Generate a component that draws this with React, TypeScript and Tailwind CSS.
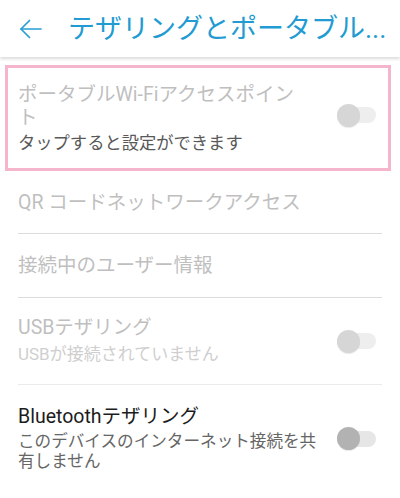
import React from "react";

const font = { fontFamily: '"Roboto", "Noto Sans CJK JP", sans-serif' };

function Switch({ dark = false }: { dark?: boolean }) {
  return (
    <div className="relative w-[39px] h-[23px] flex items-center shrink-0">
      <div className={`w-[39px] h-[16px] rounded-full ${dark ? "bg-[#e6e6e6]" : "bg-[#eeeeee]"}`} />
      <div
        className={`absolute left-0 top-0 w-[23px] h-[23px] rounded-full shadow-[0_1px_1px_rgba(0,0,0,0.08)] ${
          dark ? "bg-[#b2b2b2]" : "bg-[#d6d6d6]"
        }`}
      />
    </div>
  );
}

export default function App() {
  return (
    <div className="w-[400px] h-[498px] bg-white overflow-hidden" style={font}>
      <div className="relative z-10 h-[57px] bg-white flex items-center shadow-[0_2px_3px_rgba(0,0,0,0.14)]">
        <div className="w-[68px] pl-[19px] flex items-center">
          <svg width="24" height="24" viewBox="0 0 24 24" fill="none" stroke="#2a9dd2" strokeWidth="1.7" strokeLinecap="round" strokeLinejoin="round">
            <path d="M22 12H2" />
            <path d="M10.5 3.5 2 12l8.5 8.5" />
          </svg>
        </div>
        <div className="text-[27px] leading-[32px] text-[#219bd1] whitespace-nowrap overflow-hidden">
          テザリングとポータブル...
        </div>
      </div>

      <div className="mt-[8px] ml-[5px] mr-[9px] border-[3px] border-[#f5b6cd] pl-[10px] pr-[12px] pt-[15px] pb-[14px] flex items-center">
        <div className="flex-1">
          <div className="text-[19.5px] leading-[23px] text-[#bfbfbf]">
            ポータブルWi-Fiアクセスポイン
            <br />ト
          </div>
          <div className="mt-[3px] text-[17.3px] leading-[22px] text-[#595959]">タップすると設定ができます</div>
        </div>
        <div className="mb-[7px]">
          <Switch />
        </div>
      </div>

      <div className="px-[18px]">
        <div className="h-[63px] flex items-center border-b border-[#dcdcdc]">
          <div className="text-[19.5px] leading-[24px] text-[#bfbfbf] pt-[1px]">QR コードネットワークアクセス</div>
        </div>
        <div className="h-[64px] flex items-center border-b border-[#dcdcdc]">
          <div className="text-[19.5px] leading-[24px] text-[#bfbfbf] pt-[1px]">接続中のユーザー情報</div>
        </div>
        <div className="h-[87px] flex items-center border-b border-[#ebebeb] pr-[6px]">
          <div className="flex-1 pb-[1px]">
            <div className="text-[19.5px] leading-[24px] text-[#bfbfbf]">USBテザリング</div>
            <div className="mt-[3px] text-[17px] leading-[22px] text-[#cfcfcf]">USBが接続されていません</div>
          </div>
          <Switch />
        </div>
        <div className="pt-[20px] flex items-center pr-[6px]">
          <div className="flex-1">
            <div className="text-[19.5px] leading-[24px] text-[#1c1c1c]">Bluetoothテザリング</div>
            <div className="mt-[3px] text-[16.6px] leading-[20px] text-[#666666]">
              このデバイスのインターネット接続を共
              <br />
              有しません
            </div>
          </div>
          <Switch dark />
        </div>
      </div>
    </div>
  );
}
